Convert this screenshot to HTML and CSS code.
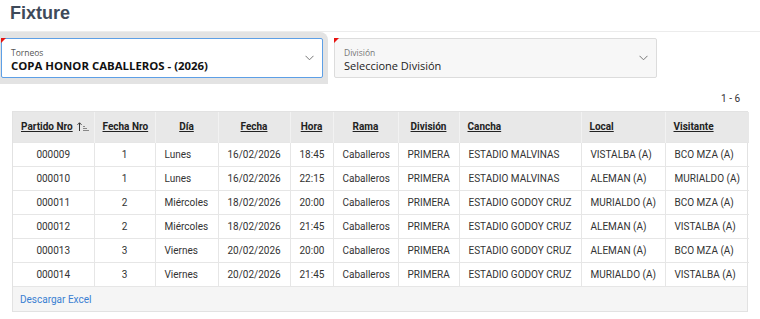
FILE: index.html
```html
<!DOCTYPE html>
<html lang="es">
<head>
    <meta charset="UTF-8">
    <meta name="viewport" content="width=device-width, initial-scale=1.0">
    <title>Fixture</title>
    <link rel="stylesheet" href="styles.css">
</head>
<body>
    <div class="page-header">
        <h1>Fixture</h1>
    </div>

    <div class="filters">
        <div class="field-focus">
            <div class="field field-active">
                <span class="required"></span>
                <label class="field-label">Torneos</label>
                <div class="field-value strong">COPA HONOR CABALLEROS - (2026)</div>
                <svg class="chevron" width="9" height="6" viewBox="0 0 9 6"><path d="M0.5 0.8 L4.5 4.8 L8.5 0.8" fill="none" stroke="#777" stroke-width="1"/></svg>
            </div>
        </div>
        <div class="field field-idle">
            <span class="required"></span>
            <label class="field-label">División</label>
            <div class="field-value">Seleccione División</div>
            <svg class="chevron" width="9" height="6" viewBox="0 0 9 6"><path d="M0.5 0.8 L4.5 4.8 L8.5 0.8" fill="none" stroke="#777" stroke-width="1"/></svg>
        </div>
    </div>

    <div class="pagination">1 - 6</div>

    <div class="report">
        <table class="fixture">
            <thead>
                <tr>
                    <th class="c-partido"><a href="#">Partido Nro</a>
                        <svg class="sort-icon" width="12" height="9" viewBox="0 0 12 9"><path d="M2.5 9 V0.8 M0.5 2.8 L2.5 0.8 L4.5 2.8" fill="none" stroke="#333" stroke-width="1"/><path d="M6 4.5 H8 M6 6.5 H10 M6 8.5 H12" stroke="#888" stroke-width="1"/></svg>
                    </th>
                    <th class="c-fechanro"><a href="#">Fecha Nro</a></th>
                    <th class="c-dia"><a href="#">Día</a></th>
                    <th class="c-fecha"><a href="#">Fecha</a></th>
                    <th class="c-hora"><a href="#">Hora</a></th>
                    <th class="c-rama"><a href="#">Rama</a></th>
                    <th class="c-division"><a href="#">División</a></th>
                    <th class="c-cancha left"><a href="#">Cancha</a></th>
                    <th class="c-local left"><a href="#">Local</a></th>
                    <th class="c-visitante left"><a href="#">Visitante</a></th>
                </tr>
            </thead>
            <tbody>
                <tr>
                    <td class="center">000009</td><td class="center">1</td><td>Lunes</td><td class="center">16/02/2026</td><td class="center">18:45</td>
                    <td>Caballeros</td><td class="center">PRIMERA</td><td>ESTADIO MALVINAS</td><td>VISTALBA (A)</td><td>BCO MZA (A)</td>
                </tr>
                <tr>
                    <td class="center">000010</td><td class="center">1</td><td>Lunes</td><td class="center">16/02/2026</td><td class="center">22:15</td>
                    <td>Caballeros</td><td class="center">PRIMERA</td><td>ESTADIO MALVINAS</td><td>ALEMAN (A)</td><td>MURIALDO (A)</td>
                </tr>
                <tr>
                    <td class="center">000011</td><td class="center">2</td><td>Miércoles</td><td class="center">18/02/2026</td><td class="center">20:00</td>
                    <td>Caballeros</td><td class="center">PRIMERA</td><td>ESTADIO GODOY CRUZ</td><td>MURIALDO (A)</td><td>BCO MZA (A)</td>
                </tr>
                <tr>
                    <td class="center">000012</td><td class="center">2</td><td>Miércoles</td><td class="center">18/02/2026</td><td class="center">21:45</td>
                    <td>Caballeros</td><td class="center">PRIMERA</td><td>ESTADIO GODOY CRUZ</td><td>ALEMAN (A)</td><td>VISTALBA (A)</td>
                </tr>
                <tr>
                    <td class="center">000013</td><td class="center">3</td><td>Viernes</td><td class="center">20/02/2026</td><td class="center">20:00</td>
                    <td>Caballeros</td><td class="center">PRIMERA</td><td>ESTADIO GODOY CRUZ</td><td>ALEMAN (A)</td><td>BCO MZA (A)</td>
                </tr>
                <tr>
                    <td class="center">000014</td><td class="center">3</td><td>Viernes</td><td class="center">20/02/2026</td><td class="center">21:45</td>
                    <td>Caballeros</td><td class="center">PRIMERA</td><td>ESTADIO GODOY CRUZ</td><td>MURIALDO (A)</td><td>VISTALBA (A)</td>
                </tr>
            </tbody>
        </table>
        <div class="report-footer">
            <a href="#">Descargar Excel</a>
        </div>
    </div>
</body>
</html>
```

FILE: styles.css
```css
body {
    margin: 0;
    font-family: Roboto, "Liberation Sans", sans-serif;
    color: #333;
    background: #fff;
}
.page-header {
    height: 32px;
    border-bottom: 1px solid #ececec;
    box-sizing: border-box;
    padding: 2px 10px 0;
}
h1 {
    margin: 0;
    font-family: "Liberation Sans", Arial, sans-serif;
    font-size: 18px;
    line-height: 22px;
    font-weight: bold;
    color: #3e4a5a;
}

.filters {
    display: flex;
    align-items: flex-start;
}
.field-focus {
    background: #e3e3e3;
    padding: 6px 5px 6px 1px;
    border-top-right-radius: 8px;
}
.field {
    position: relative;
    width: 322px;
    height: 40px;
    box-sizing: border-box;
    border-radius: 2px;
    padding: 7px 9px 0;
    font-family: "Open Sans", sans-serif;
}
.field-active {
    background: #fff;
    border: 1px solid #5d9fe6;
}
.field-idle {
    background: #f7f7f7;
    border: 1px solid #dcdcdc;
    margin: 6px 0 0 6px;
    width: 323px;
}
.required {
    position: absolute;
    top: -1px;
    left: -1px;
    width: 0;
    height: 0;
    border-top: 5px solid #e8130f;
    border-right: 5px solid transparent;
}
.field-label {
    display: block;
    font-size: 8.5px;
    line-height: 11px;
    color: #555;
    margin-top: 1px;
}
.field-idle .field-label {
    color: #777;
}
.field-value {
    font-size: 11px;
    line-height: 15px;
    color: #222;
}
.field-value.strong {
    font-weight: 700;
    font-size: 11.4px;
    color: #111;
}
.chevron {
    position: absolute;
    right: 8px;
    top: 16px;
}

.pagination {
    text-align: right;
    font-size: 10px;
    line-height: 14px;
    padding: 8px 20px 0 0;
    height: 14px;
    color: #333;
}

.report {
    margin: 5px 12px 0;
    border: 1px solid #e2e2e2;
}
.fixture {
    width: 100%;
    border-collapse: collapse;
    table-layout: fixed;
    font-size: 10px;
}
.fixture th,
.fixture td {
    box-sizing: border-box;
}
.fixture th {
    background: #e8e8e8;
    height: 30px;
    font-weight: bold;
    text-align: center;
    border-left: 1px solid #f2f2f2;
    padding: 0 8px;
    white-space: nowrap;
}
.fixture th:first-child,
.fixture td:first-child {
    border-left: none;
}
.fixture th a {
    color: #222;
    text-decoration: underline;
}
.fixture th.left {
    text-align: left;
}
.sort-icon {
    margin-left: 2px;
    vertical-align: -1px;
}
.fixture td {
    height: 24px;
    padding: 0 9px;
    border-top: 1px solid #e6e6e6;
    border-left: 1px solid #e6e6e6;
    white-space: nowrap;
    color: #333;
}
.fixture td.center {
    text-align: center;
}
.c-partido { width: 81px; }
.c-fechanro { width: 61px; }
.c-dia { width: 63px; }
.c-fecha { width: 72px; }
.c-hora { width: 43px; }
.c-rama { width: 65px; }
.c-division { width: 61px; }
.c-cancha { width: 122px; }
.c-local { width: 84px; }
.c-visitante { width: 84px; }

.report-footer {
    background: #f5f5f5;
    border-top: 1px solid #e6e6e6;
    height: 25px;
    box-sizing: border-box;
    padding: 6px 7px;
    font-size: 10px;
    line-height: 13px;
}
.report-footer a {
    color: #3a7fd2;
    text-decoration: none;
}
```
